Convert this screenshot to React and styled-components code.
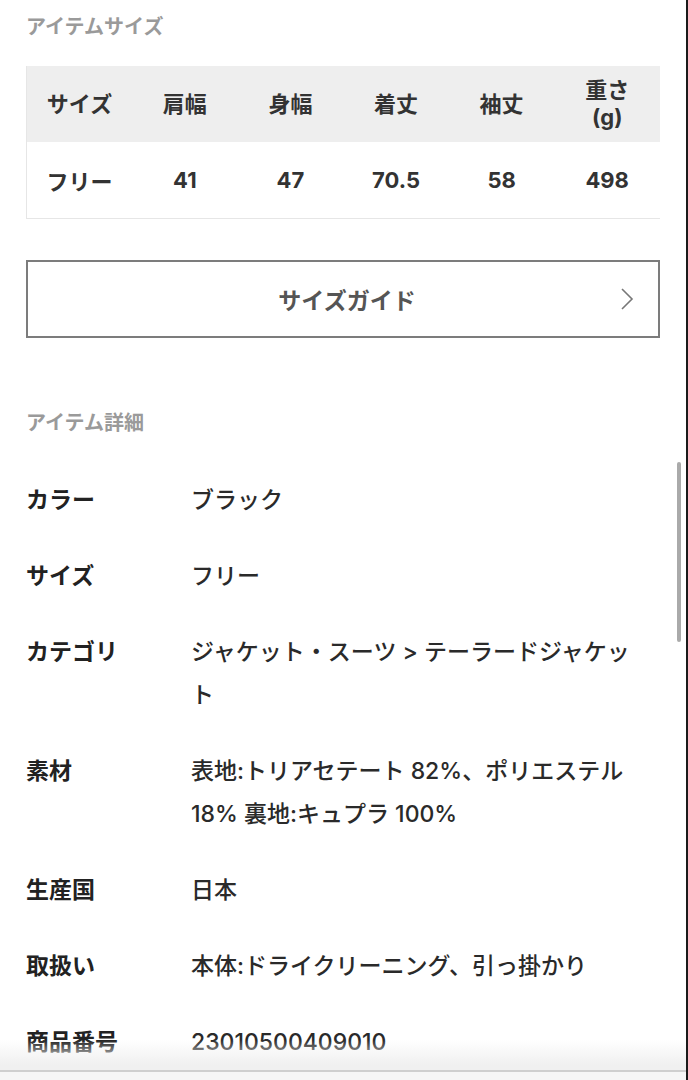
import React from 'react';
import styled, { createGlobalStyle } from 'styled-components';

const GlobalStyle = createGlobalStyle`
  html, body {
    margin: 0;
    padding: 0;
    background: #fff;
  }
  body {
    font-family: Inter, "Noto Sans CJK JP", sans-serif;
    color: #222;
    overflow: hidden;
  }
`;

const Page = styled.div`
  position: relative;
  width: 688px;
  height: 1080px;
  box-sizing: border-box;
  padding: 13px 28px 0 26px;
  overflow: hidden;
`;

const SectionTitle = styled.h2`
  margin: 0;
  font-size: 20px;
  line-height: 28px;
  font-weight: 700;
  color: #9a9a9a;
`;

const SizeTable = styled.table`
  width: 100%;
  margin-top: 25px;
  border-collapse: collapse;
  table-layout: fixed;
  border-left: 1px solid #e6e6e6;
  border-bottom: 1px solid #e6e6e6;
`;

const HeadCell = styled.th`
  height: 76px;
  padding: 0 4px;
  background: #eeeeee;
  font-size: 22px;
  line-height: 27px;
  font-weight: 700;
  color: #333;
  text-align: center;
`;

const BodyCell = styled.td`
  height: 76px;
  padding: 0 4px;
  font-size: 22px;
  font-weight: 700;
  color: #333;
  text-align: center;
`;

const GuideButton = styled.button`
  display: flex;
  align-items: center;
  justify-content: center;
  position: relative;
  width: 100%;
  height: 78px;
  margin-top: 41px;
  padding: 0 0 0 8px;
  background: #fff;
  border: 2px solid #7c7c7c;
  font-family: inherit;
  font-size: 23px;
  font-weight: 700;
  color: #555;
  cursor: pointer;
`;

const Chevron = styled.svg`
  position: absolute;
  right: 24px;
  top: 50%;
  transform: translateY(-50%);
`;

const DetailTitle = styled(SectionTitle)`
  margin-top: 71px;
`;

const DetailList = styled.dl`
  margin: 42px 0 0;
  display: flex;
  flex-direction: column;
  gap: 33px;
`;

const DetailRow = styled.div`
  display: flex;
  font-size: 23px;
  line-height: 43px;
`;

const Label = styled.dt`
  flex: 0 0 165px;
  font-weight: 700;
  color: #222;
`;

const Value = styled.dd`
  margin: 0;
  flex: 1;
  padding-right: 14px;
  font-weight: 500;
  color: #2a2a2a;
`;

const ScrollThumb = styled.div`
  position: absolute;
  right: 7px;
  top: 462px;
  width: 4px;
  height: 180px;
  border-radius: 3px;
  background: #aaaaaa;
`;

const EdgeLine = styled.div`
  position: absolute;
  right: 0;
  top: 0;
  width: 2px;
  height: 100%;
  background: #1a1a1a;
`;

const BottomFade = styled.div`
  position: absolute;
  left: 0;
  right: 2px;
  bottom: 0;
  height: 40px;
  background: linear-gradient(to bottom, rgba(240, 240, 240, 0) 0%, #f0f0f0 78%);
  border-bottom: 8px solid #f6f6f6;
  box-sizing: border-box;

  &::after {
    content: '';
    position: absolute;
    left: 0;
    right: 0;
    bottom: 0;
    height: 2px;
    background: #cfcfcf;
  }
`;

const sizeHeads = ['サイズ', '肩幅', '身幅', '着丈', '袖丈', '重さ\n(g)'];
const sizeRow = ['フリー', '41', '47', '70.5', '58', '498'];

const details = [
  ['カラー', 'ブラック'],
  ['サイズ', 'フリー'],
  ['カテゴリ', 'ジャケット・スーツ > テーラードジャケット'],
  ['素材', '表地:トリアセテート 82%、ポリエステル 18% 裏地:キュプラ 100%'],
  ['生産国', '日本'],
  ['取扱い', '本体:ドライクリーニング、引っ掛かり'],
  ['商品番号', '23010500409010'],
];

export default function App() {
  return (
    <>
      <GlobalStyle />
      <Page>
        <SectionTitle>アイテムサイズ</SectionTitle>
        <SizeTable>
          <thead>
            <tr>
              {sizeHeads.map((h) => (
                <HeadCell key={h}>
                  {h.split('\n').map((part, i) => (
                    <React.Fragment key={part}>
                      {i > 0 && <br />}
                      {part}
                    </React.Fragment>
                  ))}
                </HeadCell>
              ))}
            </tr>
          </thead>
          <tbody>
            <tr>
              {sizeRow.map((v, i) => (
                <BodyCell key={i}>{v}</BodyCell>
              ))}
            </tr>
          </tbody>
        </SizeTable>

        <GuideButton>
          サイズガイド
          <Chevron width="14" height="24" viewBox="0 0 14 24" fill="none">
            <polyline points="2,2 12,12 2,22" stroke="#777" strokeWidth="1.6" />
          </Chevron>
        </GuideButton>

        <DetailTitle>アイテム詳細</DetailTitle>
        <DetailList>
          {details.map(([label, value]) => (
            <DetailRow key={label}>
              <Label>{label}</Label>
              <Value>{value}</Value>
            </DetailRow>
          ))}
        </DetailList>

        <ScrollThumb />
        <BottomFade />
        <EdgeLine />
      </Page>
    </>
  );
}
